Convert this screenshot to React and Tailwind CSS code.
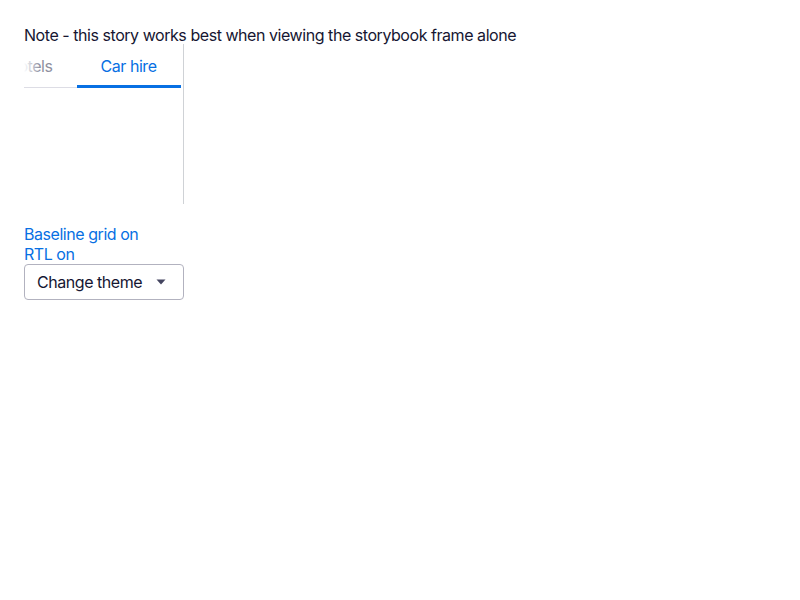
import { useState } from 'react'

function CaretDown() {
  return (
    <svg width="12" height="12" viewBox="0 0 12 12" className="fill-[#444560]">
      <path d="M1.5 3.5h9L6 8.5z" />
    </svg>
  )
}

function Tabs() {
  return (
    <div className="flex h-[160px] w-[160px] flex-col border-r border-[#cfd2d6]">
      <div className="relative h-[45px] overflow-hidden">
        <div className="flex h-[44px] -ml-[41px]">
          <button className="flex h-[44px] shrink-0 items-center whitespace-nowrap border-b border-[#dddde5] px-6 text-[#8f90a0]">
            Hotels
          </button>
          <button className="flex h-[44px] shrink-0 items-center whitespace-nowrap border-b-[3px] border-[#0770e3] px-6 pt-[2px] text-[#0770e3]">
            Car hire
          </button>
        </div>
        <div className="pointer-events-none absolute left-0 top-0 h-[43px] w-[16px] bg-gradient-to-r from-white to-white/0" />
      </div>
      <div className="flex-1" />
    </div>
  )
}

export default function App() {
  const [theme] = useState('')
  return (
    <div className="p-6 text-[16px] leading-6 tracking-[-0.45px] text-[#161632] font-['Inter',sans-serif]">
      <p className="h-[20px] leading-[22px] whitespace-nowrap">Note - this story works best when viewing the storybook frame alone</p>
      <Tabs />
      <div className="mt-[20px] flex flex-col items-start">
        <button className="h-[20px] leading-[20px] text-[#0770e3]">Baseline grid on</button>
        <button className="h-[20px] leading-[20px] text-[#0770e3]">RTL on</button>
        <div className="flex h-[36px] w-[160px] items-center justify-between rounded-[4px] border border-[#b2b2bf] pl-3 pr-4">
          <span>{theme || 'Change theme'}</span>
          <CaretDown />
        </div>
      </div>
    </div>
  )
}
